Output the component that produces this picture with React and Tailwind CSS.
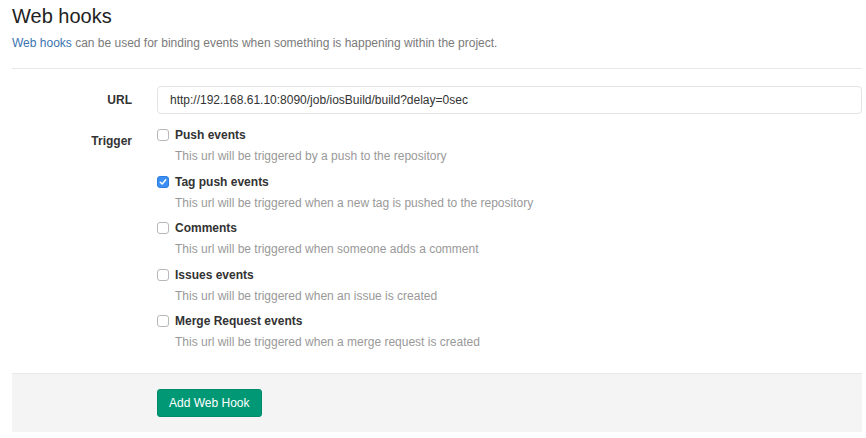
import { useState } from "react";

const triggers = [
    { id: "push", title: "Push events", desc: "This url will be triggered by a push to the repository", checked: false },
    { id: "tag", title: "Tag push events", desc: "This url will be triggered when a new tag is pushed to the repository", checked: true },
    { id: "comments", title: "Comments", desc: "This url will be triggered when someone adds a comment", checked: false },
    { id: "issues", title: "Issues events", desc: "This url will be triggered when an issue is created", checked: false },
    { id: "merge", title: "Merge Request events", desc: "This url will be triggered when a merge request is created", checked: false },
];

function Checkbox({ checked, onChange }) {
    return (
        <button
            type="button"
            onClick={onChange}
            className={`w-[12px] h-[12px] rounded-[3px] flex items-center justify-center shrink-0 ${checked
                ? "bg-[#3b8ef3] border border-[#2f7de0]"
                : "bg-white border border-[#b8b8b8]"
                }`}
        >
            {checked && (
                <svg width="8" height="8" viewBox="0 0 8 8">
                    <path d="M1.3 4.2 L3.2 6 L6.7 1.8" fill="none" stroke="white" strokeWidth="1.5" strokeLinecap="round" strokeLinejoin="round" />
                </svg>
            )}
        </button>
    );
}

export default function App() {

    const [url, setUrl] = useState("http://192.168.61.10:8090/job/iosBuild/build?delay=0sec");
    const [checks, setChecks] = useState(triggers.map(t => t.checked));

    const toggle = (i) => {
        setChecks(prev => prev.map((c, j) => (j === i ? !c : c)));
    };

    return (
        <div className="w-full h-[438px] bg-white pl-[12px] pr-[4px] font-['Liberation_Sans',Arial,sans-serif] text-[#333]">
            {/* Header */}
            <h3 className="pt-[2px] text-[20px] leading-[28px] text-[#222]">Web hooks</h3>
            <p className="mt-[3px] text-[12px] leading-[20px] text-[#7a7a7a]">
                <a href="#" className="text-[#3a75b0]">Web hooks</a> can be used for binding events when something is happening within the project.
            </p>

            <div className="mt-[15px] border-t border-[#e8e8e8]"></div>

            {/* Form */}
            <div className="mt-[17px] flex items-center">
                <label className="w-[120px] text-right text-[12px] font-bold text-[#333]">URL</label>
                <input
                    value={url}
                    onChange={e => setUrl(e.target.value)}
                    className="ml-[25px] flex-1 h-[28px] px-[12px] text-[12px] text-[#333] border border-[#e3e3e3] rounded-[4px] outline-none"
                />
            </div>

            <div className="mt-[11px] flex">
                <label className="w-[120px] pt-[6px] text-right text-[12px] leading-[20px] font-bold text-[#333]">Trigger</label>
                <div className="ml-[25px] flex flex-col gap-[5.5px]">
                    {triggers.map((t, i) => (
                        <div key={t.id}>
                            <div className="flex items-center gap-[6px] h-[20px]">
                                <Checkbox checked={checks[i]} onChange={() => toggle(i)} />
                                <span className="text-[12px] leading-[20px] font-bold text-[#333]">{t.title}</span>
                            </div>
                            <p className="mt-[1px] pl-[18px] text-[12px] leading-[20px] text-[#999]">{t.desc}</p>
                        </div>
                    ))}
                </div>
            </div>

            {/* Footer */}
            <div className="mt-[21px] bg-[#f4f4f4] border-t border-[#e8e8e8] pt-[15px] pb-[15px] pl-[145px]">
                <button className="h-[28px] px-[11px] rounded-[3px] bg-[#019875] border border-[#018b6b] text-white text-[12px]">
                    Add Web Hook
                </button>
            </div>
        </div>
    );
}
